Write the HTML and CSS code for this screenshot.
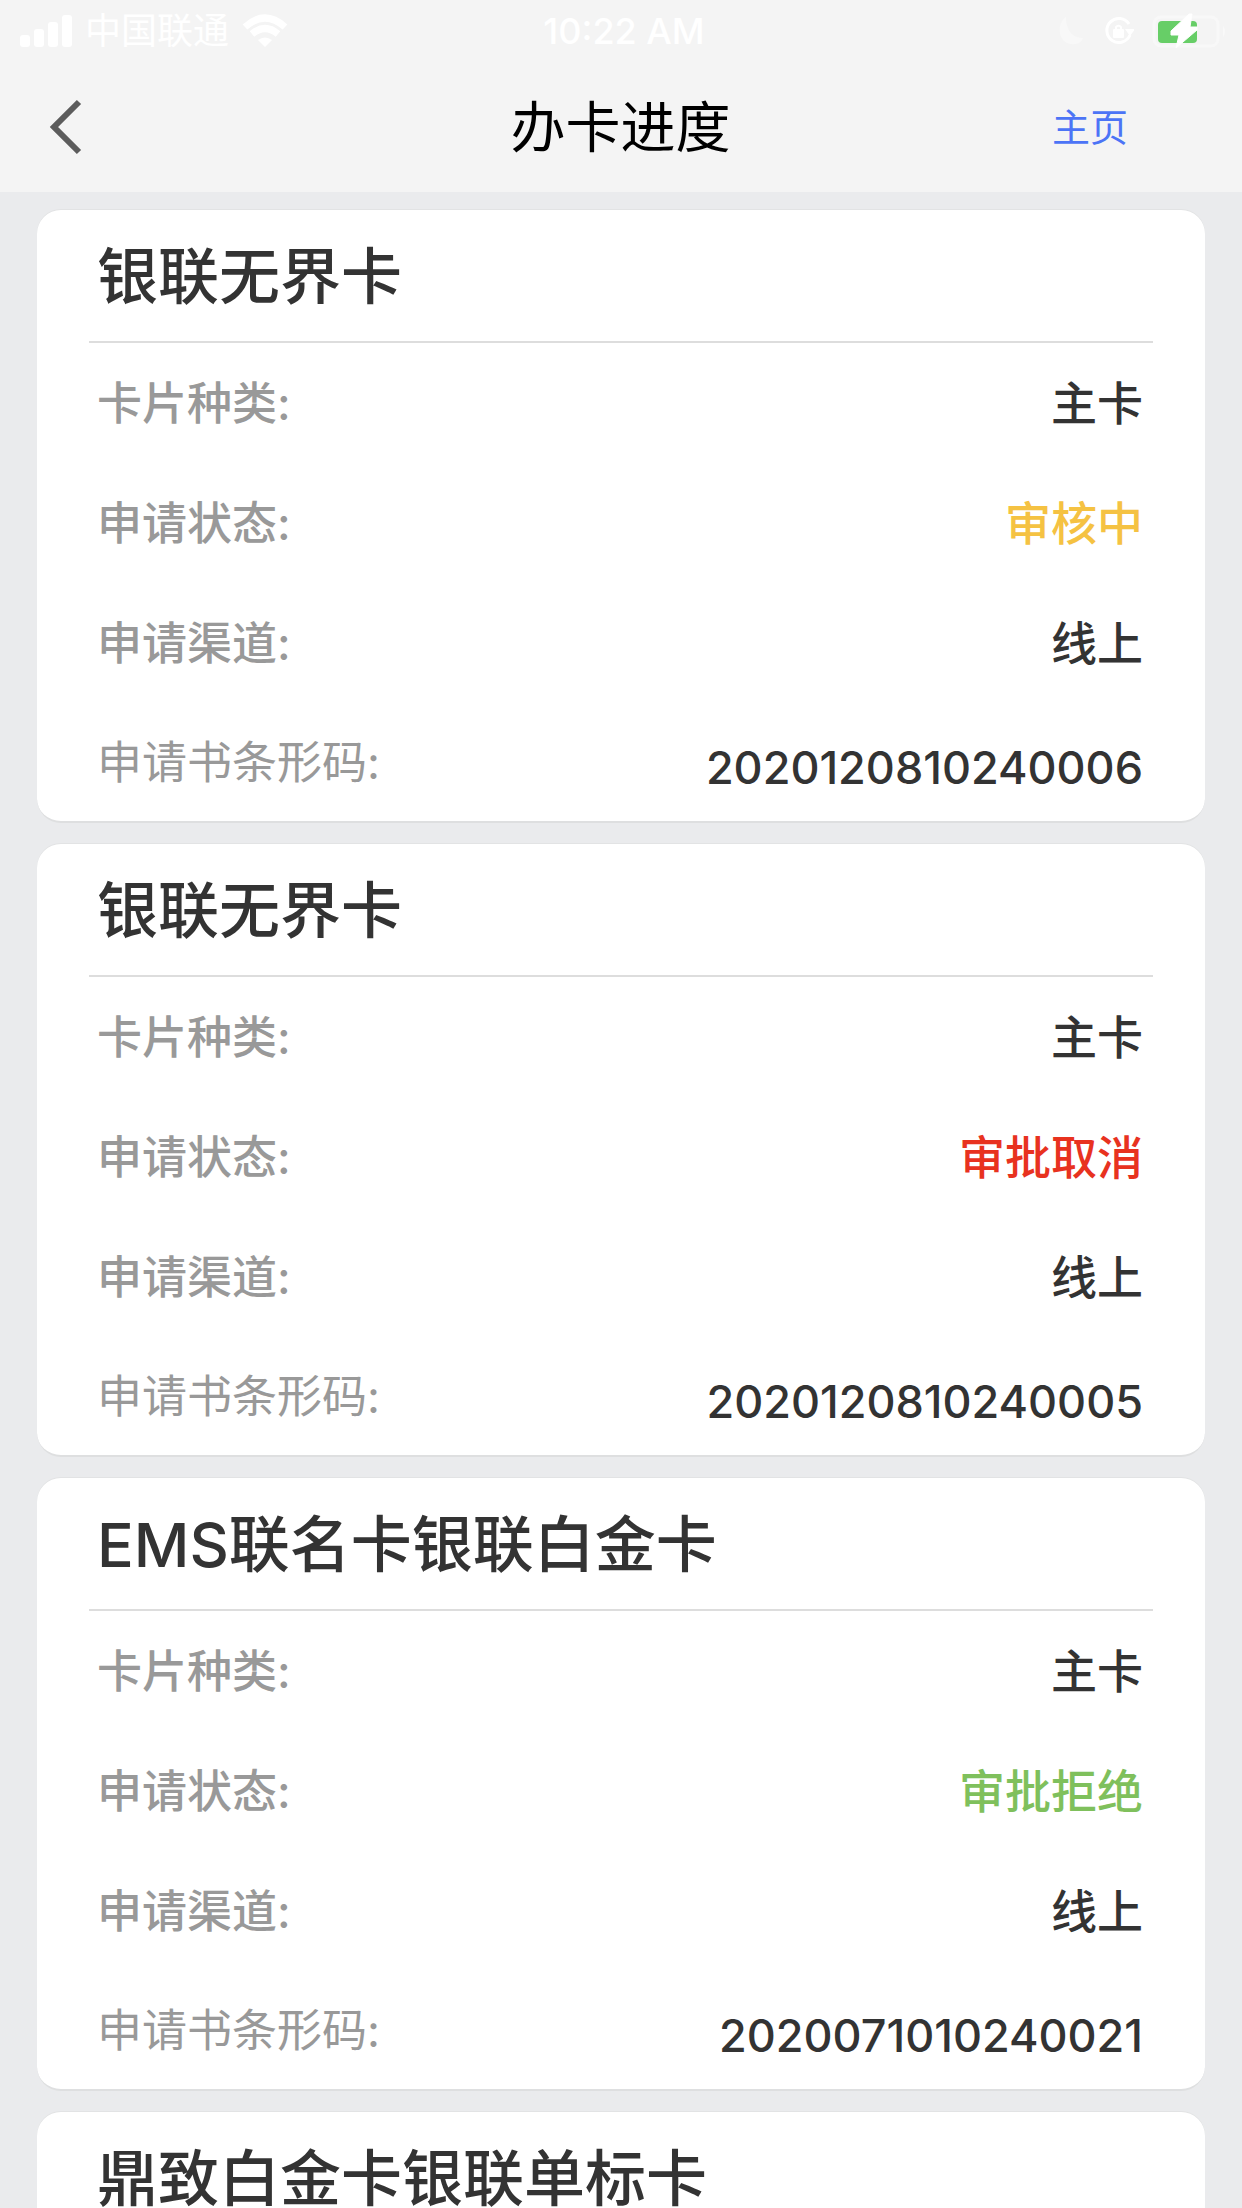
FILE: index.html
```html
<!DOCTYPE html>
<html lang="zh-CN">
<head>
<meta charset="utf-8">
<meta name="viewport" content="width=device-width, initial-scale=1">
<title>办卡进度</title>
<link rel="stylesheet" href="styles.css">
</head>
<body>
<header class="header">
  <div class="status">
    <div class="status-left">
      <svg width="52" height="34" viewBox="0 0 52 34" fill="#fff" aria-hidden="true"><rect y="21" width="10" height="12" rx="3"/><rect x="14" y="15" width="10" height="18" rx="3"/><rect x="28" y="8" width="10" height="25" rx="3"/><rect x="42" y="1" width="10" height="32" rx="3"/></svg>
      <span class="carrier">中国联通</span>
      <svg width="46" height="34" viewBox="0 0 46 34" aria-hidden="true"><g fill="none" stroke="#fff" stroke-width="7"><path d="M3 13Q23-5 43 13"/><path d="M10 20Q23 9 36 20"/></g><path d="M16 26Q23 21 30 26L23 33Z" fill="#fff"/></svg>
    </div>
    <span class="time">10:22 AM</span>
    <div class="status-right">
      <svg width="28" height="30" viewBox="0 0 28 30" aria-hidden="true"><path d="M8 1C-2 8 0 27 13 28C19 29 23 27 25 22C16 22 8 16 8 1Z" fill="#f8f8f8"/></svg>
      <svg width="30" height="30" viewBox="0 0 30 30" aria-hidden="true"><path d="M25 8A12 12 0 1 0 26 19" fill="none" stroke="#fff" stroke-width="3"/><path d="M21 13H31L26 20Z" fill="#fff"/><rect x="9" y="13" width="11" height="9" rx="1" fill="#fff"/><path d="M12 14V11a3 3 0 0 1 5 0V14" fill="none" stroke="#fff" stroke-width="2"/></svg>
      <svg width="76" height="36" viewBox="0 0 76 36" aria-hidden="true"><rect x="2" y="4" width="64" height="29" rx="7" fill="none" stroke="#f8f8f8" stroke-width="3"/><path d="M71 13Q75 18 71 24Z" fill="#f9f9f9"/><rect x="6" y="8" width="39" height="22" rx="4" fill="#67ce67"/><path d="M37 1L19 18V22H27L24 35L45 17V14H38L40 1Z" fill="#fff" stroke="#fff" stroke-width="1"/></svg>
    </div>
  </div>
  <nav class="nav">
    <button class="back" type="button" aria-label="返回"><svg width="34" height="56" viewBox="0 0 34 56" fill="none" stroke="#5c5c5c" stroke-width="6" aria-hidden="true"><path d="M30 3L5 28L30 53"/></svg></button>
    <h1 class="page-title">办卡进度</h1>
    <a class="home" href="#">主页</a>
  </nav>
</header>
<main class="list">
  <article class="card">
    <h2 class="card-title">银联无界卡</h2>
    <dl class="rows">
      <div class="row"><dt>卡片种类:</dt><dd>主卡</dd></div>
      <div class="row"><dt>申请状态:</dt><dd class="pending">审核中</dd></div>
      <div class="row"><dt>申请渠道:</dt><dd>线上</dd></div>
      <div class="row"><dt class="light">申请书条形码:</dt><dd class="code">2020120810240006</dd></div>
    </dl>
  </article>
  <article class="card">
    <h2 class="card-title">银联无界卡</h2>
    <dl class="rows">
      <div class="row"><dt>卡片种类:</dt><dd>主卡</dd></div>
      <div class="row"><dt>申请状态:</dt><dd class="cancelled">审批取消</dd></div>
      <div class="row"><dt>申请渠道:</dt><dd>线上</dd></div>
      <div class="row"><dt class="light">申请书条形码:</dt><dd class="code">2020120810240005</dd></div>
    </dl>
  </article>
  <article class="card">
    <h2 class="card-title">EMS联名卡银联白金卡</h2>
    <dl class="rows">
      <div class="row"><dt>卡片种类:</dt><dd>主卡</dd></div>
      <div class="row"><dt>申请状态:</dt><dd class="rejected">审批拒绝</dd></div>
      <div class="row"><dt>申请渠道:</dt><dd>线上</dd></div>
      <div class="row"><dt class="light">申请书条形码:</dt><dd class="code">2020071010240021</dd></div>
    </dl>
  </article>
  <article class="card">
    <h2 class="card-title">鼎致白金卡银联单标卡</h2>
  </article>
</main>
</body>
</html>
```
FILE: styles.css
```css
* {
  box-sizing: border-box;
  margin: 0;
  padding: 0;
}

body {
  display: flex;
  flex-direction: column;
  height: 100vh;
  background: #eaebed;
  color: #333;
  font-family: Inter, "Noto Sans CJK SC", sans-serif;
}

.header {
  flex: none;
  background: #f4f4f4;
}

.status,
.nav {
  display: grid;
  grid-template-columns: 1fr auto 1fr;
  align-items: center;
}

.status {
  height: 62px;
  padding: 0 14px 0 20px;
  color: #fff;
  font-size: 36px;
  line-height: 62px;
}

.status-left,
.status-right {
  display: flex;
  align-items: center;
}

.status-left {
  gap: 13px;
}

.status-right {
  justify-content: flex-end;
  gap: 18px;
}

.time {
  font-weight: 500;
}

.nav {
  height: 130px;
  padding: 0 114px 0 49px;
}

.back {
  display: flex;
  justify-self: start;
  border: 0;
  background: none;
}

.page-title {
  padding-left: 64px;
  color: #000;
  font-size: 55px;
  font-weight: 400;
  line-height: 80px;
}

.home {
  justify-self: end;
  color: #4c74f6;
  font-size: 38px;
  line-height: 56px;
  text-decoration: none;
}

.list {
  display: flex;
  flex: 1;
  flex-direction: column;
  gap: 21px;
  min-height: 0;
  padding: 18px 37px;
  overflow-y: auto;
  scrollbar-width: none;
}

.card {
  flex: none;
  padding: 0 52px;
  border-bottom: 2px solid #dedfe0;
  border-radius: 24px;
  background: #fff;
  box-shadow: 0 -1px 0 #e2e3e4;
}

.card-title {
  padding: 22px 8px 19px;
  border-bottom: 2px solid #ddd;
  font-size: 61px;
  font-weight: 500;
  line-height: 90px;
}

.row {
  display: flex;
  align-items: center;
  justify-content: space-between;
  height: 120px;
  padding: 0 10px 0 8px;
  font-size: 46px;
  font-weight: 500;
  line-height: 64px;
}

.row:last-child {
  height: 118px;
}

.row dt {
  padding-top: 2px;
  color: #999;
  font-size: 45px;
}

.row .light {
  font-weight: 400;
}

.pending {
  color: #f5c242;
}

.cancelled {
  color: #e8321f;
}

.rejected {
  color: #7fc05c;
}

.row .code {
  padding-top: 12px;
  font-size: 45px;
}
```
